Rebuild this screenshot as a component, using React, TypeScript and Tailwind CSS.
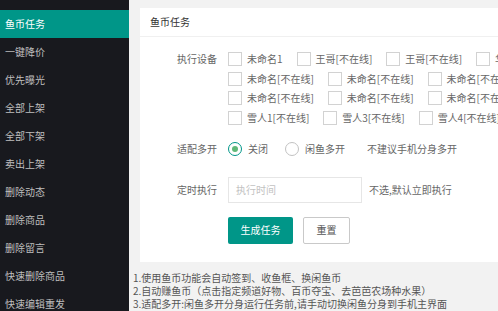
import React from "react"

const menu = [
  "鱼币任务",
  "一键降价",
  "优先曝光",
  "全部上架",
  "全部下架",
  "卖出上架",
  "删除动态",
  "删除商品",
  "删除留言",
  "快速删除商品",
  "快速编辑重发",
]

const deviceRows = [
  ["未命名1", "王哥[不在线]", "王哥[不在线]", "华为[不在线]"],
  ["未命名[不在线]", "未命名[不在线]", "未命名[不在线]", "未命名[不在线]"],
  ["未命名[不在线]", "未命名[不在线]", "未命名[不在线]", "未命名[不在线]"],
  ["雪人1[不在线]", "雪人3[不在线]", "雪人4[不在线]", "雪人5[不在线]"],
]

function Check({ label }: { label: string }) {
  return (
    <div className="flex items-center mr-[14px] shrink-0">
      <span className="w-[14px] h-[14px] border border-[#d2d2d2] bg-white shrink-0" />
      <span className="ml-[5px] whitespace-nowrap text-[#666]">{label}</span>
    </div>
  )
}

function Radio({ label, checked }: { label: string; checked?: boolean }) {
  return (
    <div className="flex items-center shrink-0">
      <span
        className={
          checked
            ? "w-[14px] h-[14px] rounded-full border border-[#009688] flex items-center justify-center"
            : "w-[14px] h-[14px] rounded-full border border-[#c2c2c2]"
        }
      >
        {checked && <span className="w-[6px] h-[6px] rounded-full bg-[#5fb878]" />}
      </span>
      <span className="ml-[6px] whitespace-nowrap text-[#666]">{label}</span>
    </div>
  )
}

export default function App() {
  return (
    <div
      className="flex w-[498px] h-[311px] overflow-hidden text-[10px] leading-[14px]"
      style={{ fontFamily: '"Noto Sans CJK SC", "Noto Sans", sans-serif' }}
    >
      {/* sidebar */}
      <div className="w-[129px] shrink-0 bg-[#18191e] pt-[10px]">
        {menu.map((m, i) => (
          <div
            key={m}
            className={
              i === 0
                ? "h-[28px] flex items-center pl-[5px] bg-[#009688] text-white"
                : "h-[28px] flex items-center pl-[5px] text-[#bfbfbf]"
            }
          >
            {m}
          </div>
        ))}
      </div>

      {/* main */}
      <div className="flex-1 bg-[#f2f2f2] pt-[8px] pl-[11px] overflow-hidden">
        <div className="w-[460px] bg-white h-[254px]">
          <div className="h-[29px] flex items-center pl-[10px] border-b border-[#f0f0f0] text-[#333]">
            鱼币任务
          </div>

          <div className="pt-[15px]">
            {/* devices */}
            <div className="flex">
              <div className="w-[77px] shrink-0 text-right text-[#666] leading-[14px]">执行设备</div>
              <div className="ml-[11px] flex flex-col gap-[5.5px]">
                {deviceRows.map((row, r) => (
                  <div key={r} className="flex">
                    {row.map((d, j) => (
                      <Check key={j} label={d} />
                    ))}
                  </div>
                ))}
              </div>
            </div>

            {/* multi open */}
            <div className="flex items-center mt-[17px]">
              <div className="w-[77px] shrink-0 text-right text-[#666]">适配多开</div>
              <div className="ml-[11px] flex items-center">
                <Radio label="关闭" checked />
                <div className="ml-[17px]">
                  <Radio label="闲鱼多开" />
                </div>
                <span className="ml-[22px] text-[#666] whitespace-nowrap">不建议手机分身多开</span>
              </div>
            </div>

            {/* timer */}
            <div className="flex items-center mt-[21px]">
              <div className="w-[77px] shrink-0 text-right text-[#666]">定时执行</div>
              <div className="ml-[11px] w-[134px] h-[26px] border border-[#e6e6e6] flex items-center pl-[7px] text-[#c2c2c2]">
                执行时间
              </div>
              <span className="ml-[7px] text-[#666] whitespace-nowrap">不选,默认立即执行</span>
            </div>

            {/* buttons */}
            <div className="flex mt-[14px] ml-[88px] gap-[10px]">
              <button className="w-[65px] h-[27px] bg-[#009688] text-white text-[10px] rounded-[2px]">
                生成任务
              </button>
              <button className="w-[47px] h-[27px] bg-white border border-[#c9c9c9] text-[#555] text-[10px] rounded-[2px]">
                重置
              </button>
            </div>
          </div>
        </div>

        <div className="mt-[9px] -ml-[7px] text-[#555] leading-[13px] whitespace-nowrap">
          <div>1.使用鱼币功能会自动签到、收鱼框、换闲鱼币</div>
          <div>2.自动赚鱼币（点击指定频道好物、百币夺宝、去芭芭农场种水果）</div>
          <div>3.适配多开:闲鱼多开分身运行任务前,请手动切换闲鱼分身到手机主界面</div>
        </div>
      </div>
    </div>
  )
}
